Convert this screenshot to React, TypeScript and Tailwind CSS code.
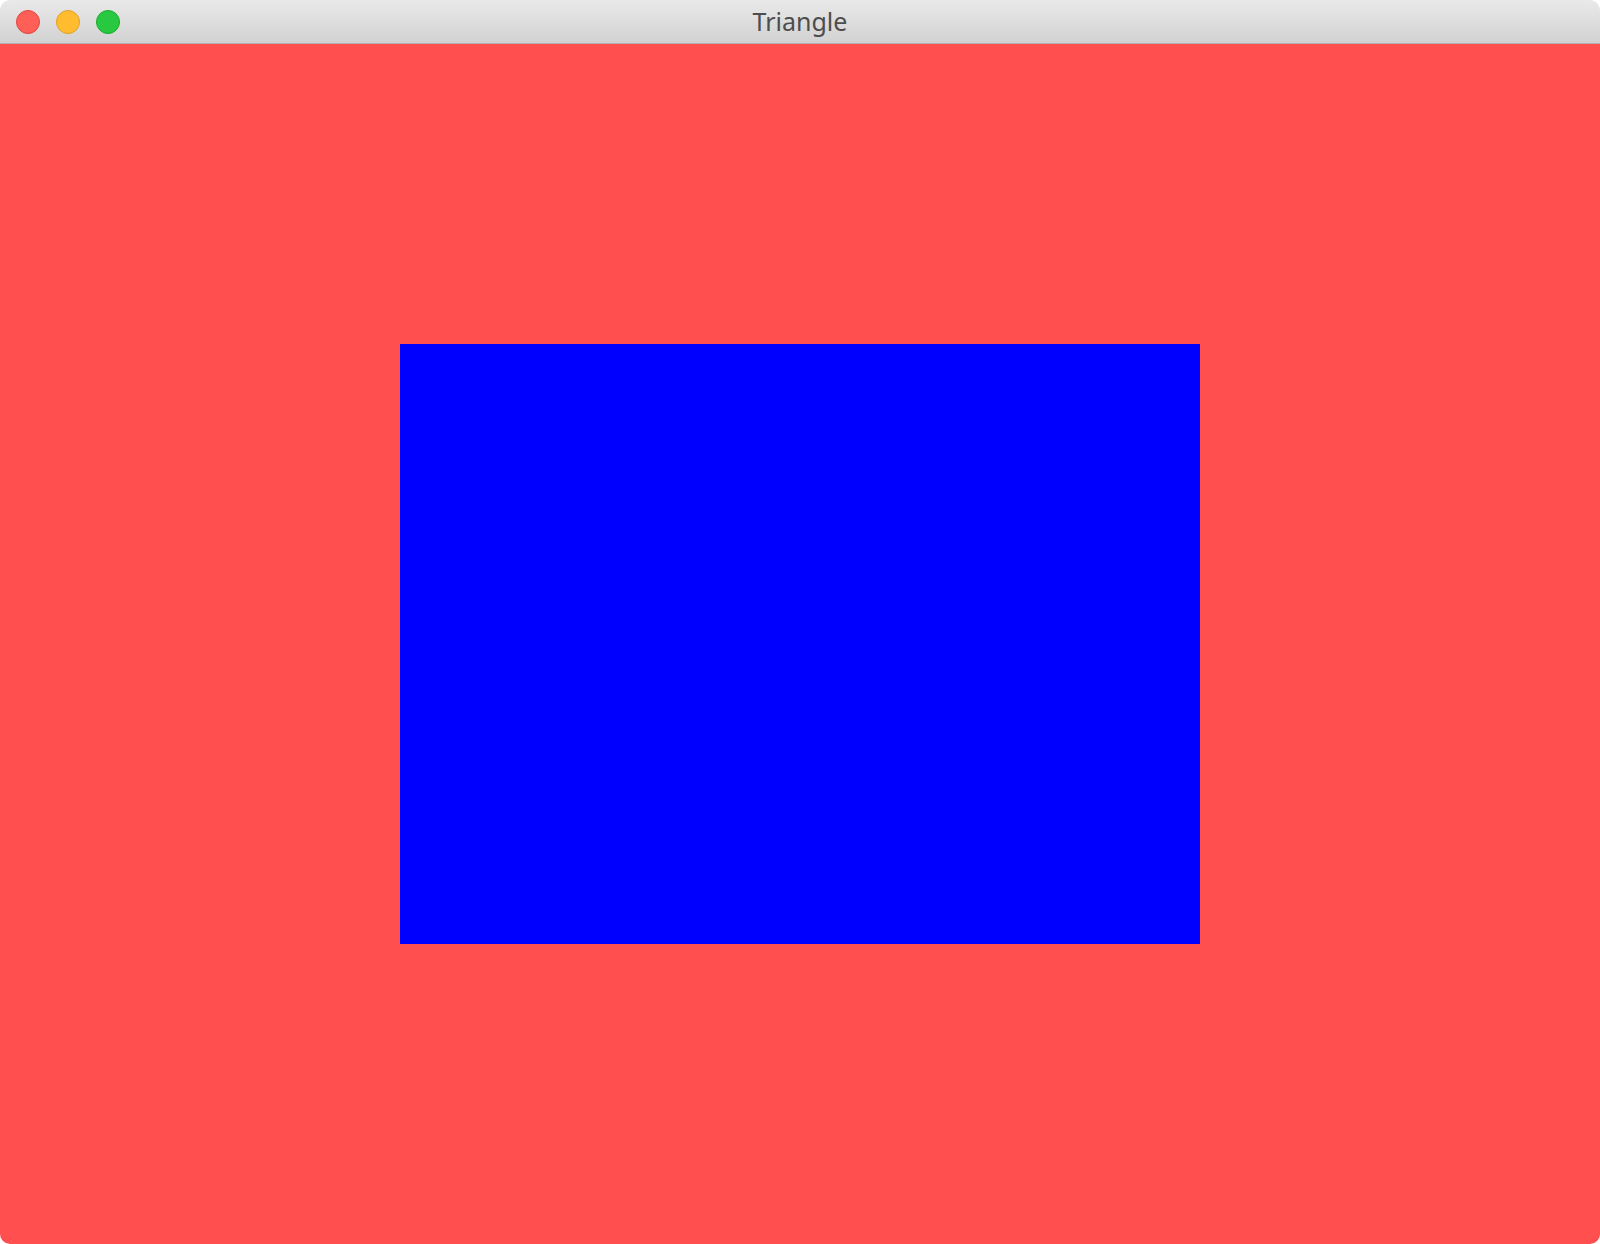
export default function App() {
  return (
    <div className="w-[1600px] h-[1244px] bg-white overflow-hidden">
      <div className="w-full h-full rounded-[10px] overflow-hidden flex flex-col">
        <div className="relative h-[44px] shrink-0 bg-gradient-to-b from-[#e9e9e9] to-[#d2d2d2] border-b border-[#b1b1b1] flex items-center justify-center">
          <div className="absolute left-[16px] top-[10px] flex gap-[16px]">
            <div className="w-[24px] h-[24px] rounded-full bg-[#fe5f57] border border-[#e0443e]" />
            <div className="w-[24px] h-[24px] rounded-full bg-[#febc2e] border border-[#dea123]" />
            <div className="w-[24px] h-[24px] rounded-full bg-[#28c840] border border-[#1aab29]" />
          </div>
          <span className="text-[25px] text-[#4d4d4d] leading-none" style={{ fontFamily: '"Noto Sans", "Liberation Sans", sans-serif' }}>
            Triangle
          </span>
        </div>
        <div className="flex-1 bg-[#ff4f4f] pt-[300px]">
          <div className="mx-auto w-[800px] h-[600px] bg-[#0000ff]" />
        </div>
      </div>
    </div>
  );
}
